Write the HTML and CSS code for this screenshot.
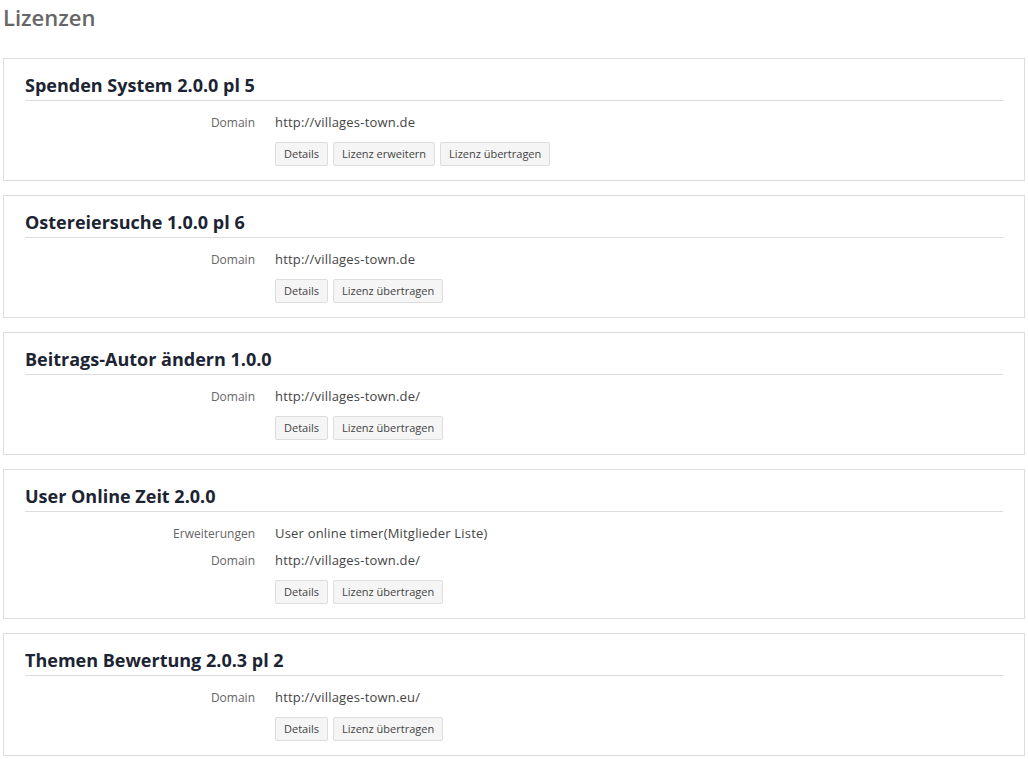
FILE: index.html
```html
<!DOCTYPE html>
<html lang="de">
<head>
<meta charset="utf-8">
<title>Lizenzen</title>
<link rel="stylesheet" href="styles.css">
</head>
<body>
<h1 class="page-title">Lizenzen</h1>

<section class="license">
  <h2 class="license-title">Spenden System 2.0.0 pl 5</h2>
  <dl class="props">
    <dt>Domain</dt><dd>http://villages-town.de</dd>
  </dl>
  <div class="actions">
    <button class="btn">Details</button>
    <button class="btn">Lizenz erweitern</button>
    <button class="btn">Lizenz übertragen</button>
  </div>
</section>

<section class="license">
  <h2 class="license-title">Ostereiersuche 1.0.0 pl 6</h2>
  <dl class="props">
    <dt>Domain</dt><dd>http://villages-town.de</dd>
  </dl>
  <div class="actions">
    <button class="btn">Details</button>
    <button class="btn">Lizenz übertragen</button>
  </div>
</section>

<section class="license">
  <h2 class="license-title">Beitrags-Autor ändern 1.0.0</h2>
  <dl class="props">
    <dt>Domain</dt><dd>http://villages-town.de/</dd>
  </dl>
  <div class="actions">
    <button class="btn">Details</button>
    <button class="btn">Lizenz übertragen</button>
  </div>
</section>

<section class="license">
  <h2 class="license-title">User Online Zeit 2.0.0</h2>
  <dl class="props">
    <dt>Erweiterungen</dt><dd>User online timer(Mitglieder Liste)</dd>
    <dt>Domain</dt><dd>http://villages-town.de/</dd>
  </dl>
  <div class="actions">
    <button class="btn">Details</button>
    <button class="btn">Lizenz übertragen</button>
  </div>
</section>

<section class="license">
  <h2 class="license-title">Themen Bewertung 2.0.3 pl 2</h2>
  <dl class="props">
    <dt>Domain</dt><dd>http://villages-town.eu/</dd>
  </dl>
  <div class="actions">
    <button class="btn">Details</button>
    <button class="btn">Lizenz übertragen</button>
  </div>
</section>
</body>
</html>
```
FILE: styles.css
```css
body {
  margin: 0;
  padding: 0 3px;
  font-family: "Open Sans", "DejaVu Sans", sans-serif;
  background: #fff;
  color: #333;
}

.page-title {
  margin: 0;
  padding-top: 3px;
  height: 55px;
  font-size: 22px;
  font-weight: 600;
  line-height: 28px;
  color: #666;
}

.license {
  border: 1px solid #ddd;
  padding: 14px 21px;
  margin-bottom: 14px;
}

.license-title {
  margin: 0 0 12px;
  padding-bottom: 3px;
  border-bottom: 1px solid #ddd;
  font-size: 18px;
  font-weight: 700;
  line-height: 24px;
  color: #1c2433;
}

.props {
  display: grid;
  grid-template-columns: 230px 1fr;
  column-gap: 20px;
  row-gap: 9px;
  margin: 0 0 11px;
  font-size: 12px;
  line-height: 18px;
}

/* labels sit one pixel lower so they share the value's baseline */
.props dt {
  padding-top: 1px;
  line-height: 17px;
  text-align: right;
  color: #666;
}

.props dd {
  margin: 0;
  font-size: 13px;
  letter-spacing: 0.2px;
  color: #444;
}

.actions {
  display: flex;
  gap: 5px;
  padding-left: 250px;
}

.btn {
  font-family: inherit;
  font-size: 11px;
  line-height: 14px;
  padding: 4px 8px;
  height: 24px;
  color: #444;
  background: #f5f5f5;
  border: 1px solid #ddd;
  border-radius: 2px;
}
```
